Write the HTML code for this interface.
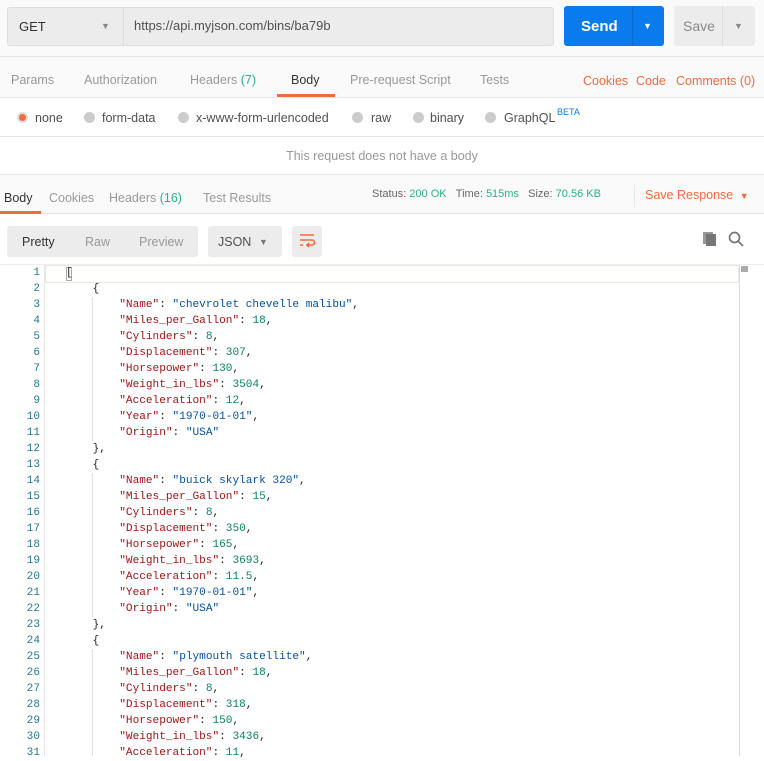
<!DOCTYPE html>
<html><head><meta charset="utf-8"><style>
*{margin:0;padding:0;box-sizing:border-box}
body{width:764px;height:756px;overflow:hidden;background:#fff;font-family:"Liberation Sans",Arial,sans-serif;font-size:12.5px;color:#505050;position:relative}
.a{position:absolute;white-space:nowrap}
.o{color:#f26b3a}
.g{color:#26b47f}
.code{position:absolute;left:0;top:265px;font-family:"Liberation Mono",monospace;font-size:11.1px;line-height:16px}
.ln{position:absolute;left:0;width:40px;text-align:right;color:#237893}
.cl{position:absolute;left:66px;color:#222;white-space:pre}
.k{color:#a31515}.s{color:#0451a5}.n{color:#098658}
</style></head><body>
<div class="a" style="left:0;top:0;width:764px;height:56px;background:#fafafa"></div>
<div class="a" style="left:7px;top:7px;width:547px;height:39px;background:#ececec;border:1px solid #ddd;border-radius:3px"></div>
<div class="a" style="left:123px;top:7px;width:1px;height:39px;background:#ddd"></div>
<div class="a" style="left:19px;top:19px;color:#333;font-size:13px">GET</div>
<div class="a" style="left:101px;top:21px;color:#888;font-size:9px">▼</div>
<div class="a" style="left:134px;top:18px;color:#505050;font-size:13px">https://api.myjson.com/bins/ba79b</div>
<div class="a" style="left:564px;top:6px;width:100px;height:40px;background:#097bed;border-radius:3px"></div>
<div class="a" style="left:632px;top:6px;width:1px;height:40px;background:#0a6ad0"></div>
<div class="a" style="left:581px;top:18px;color:#fff;font-size:15px;font-weight:bold">Send</div>
<div class="a" style="left:643px;top:21px;color:#fff;font-size:9px">▼</div>
<div class="a" style="left:674px;top:6px;width:81px;height:40px;background:#ececec;border-radius:3px"></div>
<div class="a" style="left:722px;top:6px;width:1px;height:40px;background:#ddd"></div>
<div class="a" style="left:683px;top:18px;color:#888;font-size:14px">Save</div>
<div class="a" style="left:734px;top:21px;color:#888;font-size:9px">▼</div>
<div class="a" style="left:0;top:56px;width:764px;height:1px;background:#e6e6e6"></div>

<div class="a" style="left:0;top:57px;width:764px;height:40px;background:#fafafa"></div>
<div class="a" style="left:11px;top:73px;color:#999">Params</div>
<div class="a" style="left:84px;top:73px;color:#999">Authorization</div>
<div class="a" style="left:190px;top:73px;color:#999">Headers <span class="g">(7)</span></div>
<div class="a" style="left:291px;top:73px;color:#333">Body</div>
<div class="a" style="left:277px;top:94px;width:58px;height:3px;background:#f26b3a"></div>
<div class="a" style="left:350px;top:73px;color:#999">Pre-request Script</div>
<div class="a" style="left:480px;top:73px;color:#999">Tests</div>
<div class="a o" style="left:583px;top:74px">Cookies</div>
<div class="a o" style="left:636px;top:74px">Code</div>
<div class="a o" style="left:676px;top:74px">Comments (0)</div>
<div class="a" style="left:0;top:97px;width:764px;height:1px;background:#e6e6e6"></div>

<div class="a" style="left:17px;top:112px;width:11px;height:11px;border-radius:50%;background:#f26b3a;border:2px solid #ddd"></div>
<div class="a" style="left:35px;top:111px">none</div>
<div class="a" style="left:84px;top:112px;width:11px;height:11px;border-radius:50%;background:#ccc"></div>
<div class="a" style="left:102px;top:111px">form-data</div>
<div class="a" style="left:178px;top:112px;width:11px;height:11px;border-radius:50%;background:#ccc"></div>
<div class="a" style="left:196px;top:111px">x-www-form-urlencoded</div>
<div class="a" style="left:352px;top:112px;width:11px;height:11px;border-radius:50%;background:#ccc"></div>
<div class="a" style="left:371px;top:111px">raw</div>
<div class="a" style="left:413px;top:112px;width:11px;height:11px;border-radius:50%;background:#ccc"></div>
<div class="a" style="left:430px;top:111px">binary</div>
<div class="a" style="left:485px;top:112px;width:11px;height:11px;border-radius:50%;background:#ccc"></div>
<div class="a" style="left:504px;top:111px">GraphQL</div>
<div class="a" style="left:557px;top:107px;color:#097bed;font-size:9px">BETA</div>
<div class="a" style="left:0;top:136px;width:764px;height:1px;background:#e6e6e6"></div>
<div class="a" style="left:0;top:149px;width:764px;text-align:center;color:#999">This request does not have a body</div>
<div class="a" style="left:0;top:174px;width:764px;height:40px;background:#fafafa;border-top:1px solid #e6e6e6;border-bottom:1px solid #e6e6e6"></div>
<div class="a" style="left:4px;top:191px;color:#333">Body</div>
<div class="a" style="left:0;top:211px;width:41px;height:3px;background:#f26b3a"></div>
<div class="a" style="left:49px;top:191px;color:#999">Cookies</div>
<div class="a" style="left:109px;top:191px;color:#999">Headers <span class="g">(16)</span></div>
<div class="a" style="left:203px;top:191px;color:#999">Test Results</div>
<div class="a" style="left:372px;top:188px;font-size:11px;color:#666">Status: <span class="g">200 OK</span>&nbsp;&nbsp;&nbsp;Time: <span class="g">515ms</span>&nbsp;&nbsp;&nbsp;Size: <span class="g">70.56 KB</span></div>
<div class="a" style="left:634px;top:185px;width:1px;height:22px;background:#e6e6e6"></div>
<div class="a o" style="left:645px;top:188px">Save Response <span style="font-size:9px;margin-left:3px">▼</span></div>

<div class="a" style="left:7px;top:226px;width:191px;height:31px;background:#ececec;border-radius:3px"></div>
<div class="a" style="left:22px;top:235px;color:#333">Pretty</div>
<div class="a" style="left:85px;top:235px;color:#999">Raw</div>
<div class="a" style="left:139px;top:235px;color:#999">Preview</div>
<div class="a" style="left:208px;top:226px;width:74px;height:31px;background:#ececec;border-radius:3px"></div>
<div class="a" style="left:218px;top:235px;color:#505050">JSON</div>
<div class="a" style="left:259px;top:237px;font-size:9px;color:#777">▼</div>
<div class="a" style="left:292px;top:226px;width:30px;height:31px;background:#ececec;border-radius:3px"></div>
<svg class="a" style="left:298px;top:232px" width="18" height="18" viewBox="0 0 18 18" fill="none" stroke="#f26b3a" stroke-width="1.6"><path d="M2 3h14M2 8h12a2.5 2.5 0 0 1 0 5H9M11 11l-2 2 2 2M2 13h3"/></svg>
<svg class="a" style="left:702px;top:231px" width="16" height="16" viewBox="0 0 16 16"><rect x="1" y="1" width="10" height="12" fill="#999"/><rect x="4" y="3" width="10" height="12" fill="#777"/></svg>
<svg class="a" style="left:728px;top:231px" width="16" height="16" viewBox="0 0 16 16" fill="none" stroke="#777" stroke-width="1.7"><circle cx="6.5" cy="6.5" r="5"/><path d="M10 10l5 5"/></svg>

<div class="a" style="left:0;top:264px;width:764px;height:1px;background:#eee"></div>
<div class="a" style="left:44px;top:265px;width:1px;height:491px;background:#e5e5e5"></div>
<div class="a" style="left:45px;top:265px;width:694px;height:18px;border:1px solid #e8e8e8;background:#fffffe"></div>
<div class="a" style="left:739px;top:265px;width:1px;height:491px;background:#ddd"></div>
<div class="a" style="left:741px;top:266px;width:7px;height:6px;background:#aaa"></div>
<div class="a" style="left:66px;top:267px;width:6px;height:14px;border:1px solid #aaa"></div>

<div class="code">
<div class="ln" style="top:0">1</div><div class="cl" style="top:0">[</div>
<div class="ln" style="top:16px">2</div><div class="cl" style="top:16px">    {</div>
<div class="ln" style="top:32px">3</div><div class="cl" style="top:32px">        <span class="k">"Name"</span>: <span class="s">"chevrolet chevelle malibu"</span>,</div>
<div class="ln" style="top:48px">4</div><div class="cl" style="top:48px">        <span class="k">"Miles_per_Gallon"</span>: <span class="n">18</span>,</div>
<div class="ln" style="top:64px">5</div><div class="cl" style="top:64px">        <span class="k">"Cylinders"</span>: <span class="n">8</span>,</div>
<div class="ln" style="top:80px">6</div><div class="cl" style="top:80px">        <span class="k">"Displacement"</span>: <span class="n">307</span>,</div>
<div class="ln" style="top:96px">7</div><div class="cl" style="top:96px">        <span class="k">"Horsepower"</span>: <span class="n">130</span>,</div>
<div class="ln" style="top:112px">8</div><div class="cl" style="top:112px">        <span class="k">"Weight_in_lbs"</span>: <span class="n">3504</span>,</div>
<div class="ln" style="top:128px">9</div><div class="cl" style="top:128px">        <span class="k">"Acceleration"</span>: <span class="n">12</span>,</div>
<div class="ln" style="top:144px">10</div><div class="cl" style="top:144px">        <span class="k">"Year"</span>: <span class="s">"1970-01-01"</span>,</div>
<div class="ln" style="top:160px">11</div><div class="cl" style="top:160px">        <span class="k">"Origin"</span>: <span class="s">"USA"</span></div>
<div class="ln" style="top:176px">12</div><div class="cl" style="top:176px">    },</div>
<div class="ln" style="top:192px">13</div><div class="cl" style="top:192px">    {</div>
<div class="ln" style="top:208px">14</div><div class="cl" style="top:208px">        <span class="k">"Name"</span>: <span class="s">"buick skylark 320"</span>,</div>
<div class="ln" style="top:224px">15</div><div class="cl" style="top:224px">        <span class="k">"Miles_per_Gallon"</span>: <span class="n">15</span>,</div>
<div class="ln" style="top:240px">16</div><div class="cl" style="top:240px">        <span class="k">"Cylinders"</span>: <span class="n">8</span>,</div>
<div class="ln" style="top:256px">17</div><div class="cl" style="top:256px">        <span class="k">"Displacement"</span>: <span class="n">350</span>,</div>
<div class="ln" style="top:272px">18</div><div class="cl" style="top:272px">        <span class="k">"Horsepower"</span>: <span class="n">165</span>,</div>
<div class="ln" style="top:288px">19</div><div class="cl" style="top:288px">        <span class="k">"Weight_in_lbs"</span>: <span class="n">3693</span>,</div>
<div class="ln" style="top:304px">20</div><div class="cl" style="top:304px">        <span class="k">"Acceleration"</span>: <span class="n">11.5</span>,</div>
<div class="ln" style="top:320px">21</div><div class="cl" style="top:320px">        <span class="k">"Year"</span>: <span class="s">"1970-01-01"</span>,</div>
<div class="ln" style="top:336px">22</div><div class="cl" style="top:336px">        <span class="k">"Origin"</span>: <span class="s">"USA"</span></div>
<div class="ln" style="top:352px">23</div><div class="cl" style="top:352px">    },</div>
<div class="ln" style="top:368px">24</div><div class="cl" style="top:368px">    {</div>
<div class="ln" style="top:384px">25</div><div class="cl" style="top:384px">        <span class="k">"Name"</span>: <span class="s">"plymouth satellite"</span>,</div>
<div class="ln" style="top:400px">26</div><div class="cl" style="top:400px">        <span class="k">"Miles_per_Gallon"</span>: <span class="n">18</span>,</div>
<div class="ln" style="top:416px">27</div><div class="cl" style="top:416px">        <span class="k">"Cylinders"</span>: <span class="n">8</span>,</div>
<div class="ln" style="top:432px">28</div><div class="cl" style="top:432px">        <span class="k">"Displacement"</span>: <span class="n">318</span>,</div>
<div class="ln" style="top:448px">29</div><div class="cl" style="top:448px">        <span class="k">"Horsepower"</span>: <span class="n">150</span>,</div>
<div class="ln" style="top:464px">30</div><div class="cl" style="top:464px">        <span class="k">"Weight_in_lbs"</span>: <span class="n">3436</span>,</div>
<div class="ln" style="top:480px">31</div><div class="cl" style="top:480px">        <span class="k">"Acceleration"</span>: <span class="n">11</span>,</div>
</div>
<div class="a" style="left:92px;top:297px;width:1px;height:144px;background:#e0e0e0"></div>
<div class="a" style="left:92px;top:473px;width:1px;height:144px;background:#e0e0e0"></div>
<div class="a" style="left:92px;top:649px;width:1px;height:107px;background:#e0e0e0"></div>
</body></html>
